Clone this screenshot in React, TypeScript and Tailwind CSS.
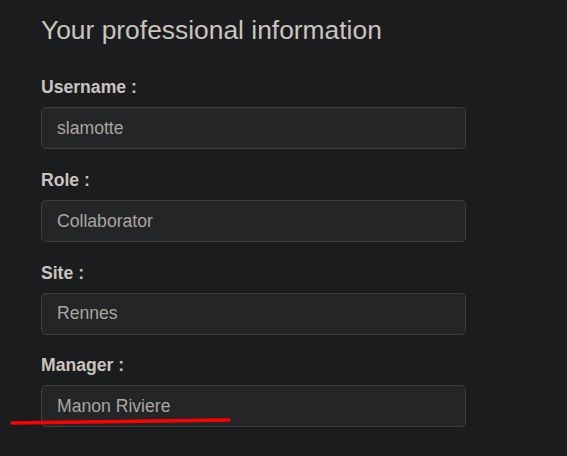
const fields = [
  { label: 'Username :', value: 'slamotte' },
  { label: 'Role :', value: 'Collaborator' },
  { label: 'Site :', value: 'Rennes' },
  { label: 'Manager :', value: 'Manon Riviere' },
];

export default function App() {
  return (
    <div
      className="relative w-[567px] h-[456px] overflow-hidden bg-[#1b1c1e] pl-[41px] pt-[15px]"
      style={{ fontFamily: '"Liberation Sans", Arial, sans-serif' }}
    >
      <h3 className="text-[26.4px] leading-[1.2] font-normal text-[#c9c4bd] mb-[27.6px]">
        Your professional information
      </h3>

      {/* Form fields */}
      <div className="flex flex-col gap-[17.7px] w-[425px]">
        {fields.map((f) => (
          <div key={f.label} className="flex flex-col">
            <label className="text-[17.6px] leading-[1.5] font-bold text-[#c9c4bd] mb-[6.6px]">
              {f.label}
            </label>
            <div className="h-[42px] flex items-center px-[15px] rounded-[5px] border border-[#3d4043] bg-[#232527] text-[17.6px] text-[#aba69f]">
              {f.value}
            </div>
          </div>
        ))}
      </div>

      {/* Hand-drawn red underline annotation */}
      <svg className="absolute left-0 top-0 pointer-events-none" width="567" height="456">
        <path d="M12 423 L229 420" stroke="#ff0000" strokeWidth="3.5" strokeLinecap="round" fill="none" />
      </svg>
    </div>
  );
}
